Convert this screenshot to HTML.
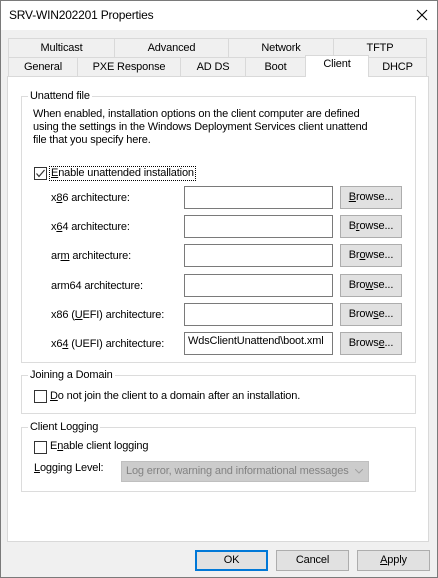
<!DOCTYPE html>
<html><head><style>
*{box-sizing:border-box;margin:0;padding:0}
body{width:438px;height:578px;background:#f0f0f0;font-family:"Liberation Sans",sans-serif;font-size:11px;letter-spacing:-0.15px;color:#000;position:relative;overflow:hidden}
.a{position:absolute;white-space:nowrap}
.win{position:absolute;left:0;top:0;width:438px;height:578px;border:1px solid #7a7a7a}
.title{position:absolute;left:1px;top:1px;width:436px;height:29px;background:#fff}
.tab{position:absolute;height:19px;border:1px solid #d9d9d9;border-bottom:none;background:#f0f0f0;text-align:center;line-height:18px}
.panel{position:absolute;left:7px;top:76px;width:422px;height:466px;background:#fff;border:1px solid #d9d9d9}
.grp{position:absolute;border:1px solid #dcdcdc}
.gl{position:absolute;background:#fff;padding:0 2px;line-height:14px}
.tb{position:absolute;left:184px;width:149px;height:23px;border:1px solid #7a7a7a;background:#fff;padding-left:3px;line-height:20px}
.br{position:absolute;left:340px;width:62px;height:23px;border:1px solid #adadad;background:#e1e1e1;text-align:center;line-height:21px}
.lab{position:absolute;left:51px}
.cb{position:absolute;width:13px;height:13px;border:1px solid #333;background:#fff}
.btn{position:absolute;top:550px;width:73px;height:21px;border:1px solid #adadad;background:#e1e1e1;text-align:center;line-height:19px}
u{text-decoration:underline}
</style></head><body>
<div class="win"></div>
<div class="title"></div>
<div class="a" style="left:9px;top:8px;font-size:12px;letter-spacing:-0.2px">SRV-WIN202201 Properties</div>
<svg class="a" style="left:416px;top:9px" width="12" height="12"><path d="M1 1L11 11M11 1L1 11" stroke="#000" stroke-width="1.1"/></svg>

<div class="tab" style="left:8px;top:38px;width:107px">Multicast</div>
<div class="tab" style="left:114px;top:38px;width:115px">Advanced</div>
<div class="tab" style="left:228px;top:38px;width:106px">Network</div>
<div class="tab" style="left:333px;top:38px;width:94px">TFTP</div>
<div class="tab" style="left:8px;top:57px;width:70px">General</div>
<div class="tab" style="left:77px;top:57px;width:104px">PXE Response</div>
<div class="tab" style="left:180px;top:57px;width:66px">AD DS</div>
<div class="tab" style="left:245px;top:57px;width:61px">Boot</div>
<div class="tab" style="left:368px;top:57px;width:59px">DHCP</div>
<div class="panel"></div>
<div class="tab" style="left:305px;top:55px;width:64px;height:22px;background:#fff;line-height:17px">Client</div>

<div class="grp" style="left:21px;top:96px;width:395px;height:267px"></div>
<div class="gl" style="left:28px;top:89px">Unattend file</div>
<div class="a" style="left:33px;top:108px;line-height:13px">When enabled, installation options on the client computer are defined<br>using the settings in the Windows Deployment Services client unattend<br>file that you specify here.</div>
<div class="cb" style="left:34px;top:167px"></div>
<svg class="a" style="left:35px;top:168px" width="11" height="11"><path d="M1.5 5.5L4 8.5L9.5 2" stroke="#333" fill="none" stroke-width="1.2"/></svg>
<div class="a" style="left:49px;top:166px;border:1px dotted #000;padding:0 1px;line-height:13px"><u>E</u>nable unattended installation</div>

<div class="lab" style="top:192px">x<u>8</u>6 architecture:</div>
<div class="tb" style="top:186px"></div><div class="br" style="top:186px"><u>B</u>rowse...</div>
<div class="lab" style="top:221px">x<u>6</u>4 architecture:</div>
<div class="tb" style="top:215px"></div><div class="br" style="top:215px">B<u>r</u>owse...</div>
<div class="lab" style="top:250px">ar<u>m</u> architecture:</div>
<div class="tb" style="top:244px"></div><div class="br" style="top:244px">Br<u>o</u>wse...</div>
<div class="lab" style="top:280px">arm64 architecture:</div>
<div class="tb" style="top:274px"></div><div class="br" style="top:274px">Bro<u>w</u>se...</div>
<div class="lab" style="top:309px">x86 (<u>U</u>EFI) architecture:</div>
<div class="tb" style="top:303px"></div><div class="br" style="top:303px">Brow<u>s</u>e...</div>
<div class="lab" style="top:338px">x6<u>4</u> (UEFI) architecture:</div>
<div class="tb" style="top:332px;line-height:17px">WdsClientUnattend\boot.xml</div><div class="br" style="top:332px">Brows<u>e</u>...</div>

<div class="grp" style="left:21px;top:375px;width:395px;height:39px"></div>
<div class="gl" style="left:28px;top:368px">Joining a Domain</div>
<div class="cb" style="left:34px;top:390px"></div>
<div class="a" style="left:50px;top:390px"><u>D</u>o not join the client to a domain after an installation.</div>

<div class="grp" style="left:21px;top:427px;width:395px;height:65px"></div>
<div class="gl" style="left:28px;top:420px">Client Logging</div>
<div class="cb" style="left:34px;top:441px"></div>
<div class="a" style="left:50px;top:440px">E<u>n</u>able client logging</div>
<div class="a" style="left:34px;top:462px"><u>L</u>ogging Level:</div>
<div class="a" style="left:121px;top:461px;width:248px;height:21px;background:#cccccc;border:1px solid #bfbfbf;color:#838383;padding-left:4px;line-height:19px">Log error, warning and informational messages</div>
<svg class="a" style="left:355px;top:469px" width="8" height="5"><path d="M0 0L4 4L8 0" stroke="#a0a0a0" fill="none"/></svg>

<div class="btn" style="left:195px;border:2px solid #0078d7;line-height:17px">OK</div>
<div class="btn" style="left:276px">Cancel</div>
<div class="btn" style="left:357px"><u>A</u>pply</div>
</body></html>
